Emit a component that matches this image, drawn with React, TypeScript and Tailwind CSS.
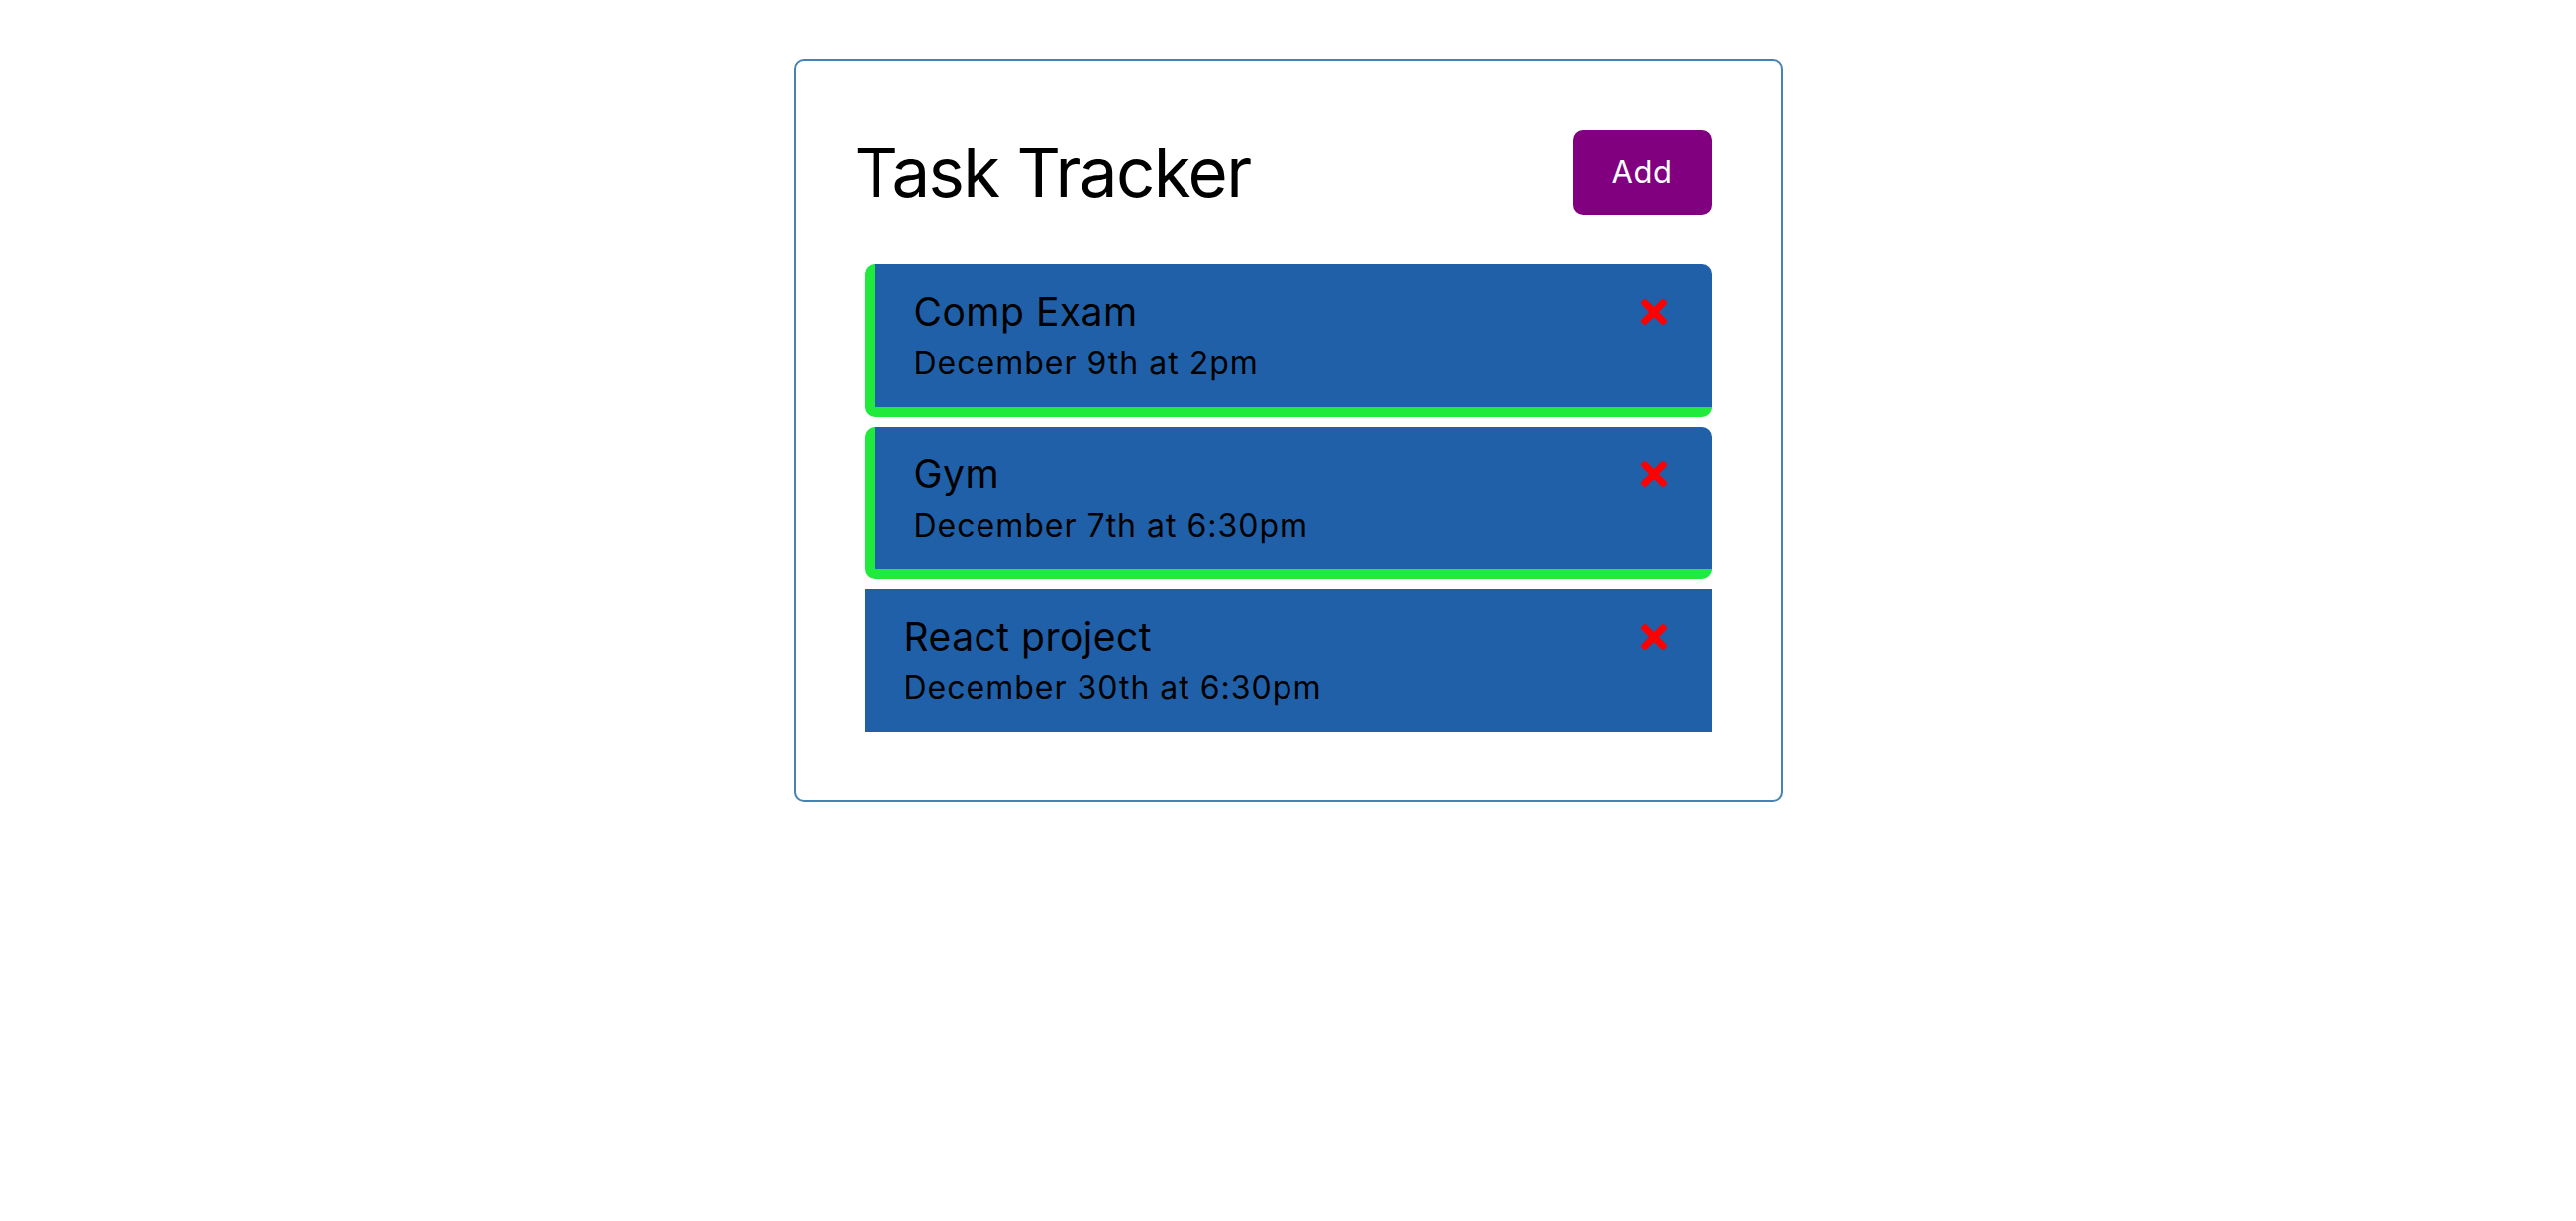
import { FaTimes } from 'react-icons/fa'

type Task = {
  id: number
  text: string
  day: string
  reminder: boolean
}

const tasks: Task[] = [
  { id: 1, text: 'Comp Exam', day: 'December 9th at 2pm', reminder: true },
  { id: 2, text: 'Gym', day: 'December 7th at 6:30pm', reminder: true },
  { id: 3, text: 'React project', day: 'December 30th at 6:30pm', reminder: false },
]

function TaskItem({ task }: { task: Task }) {
  return (
    <div
      className={
        task.reminder
          ? 'm-[10px] rounded-[10px] border-b-[10px] border-l-[10px] border-[#20ea3c] bg-[#2060a8] px-10 py-5'
          : 'm-[10px] bg-[#2060a8] px-10 py-5'
      }
    >
      <h3 className="flex items-center justify-between text-[39px] leading-[56px] font-normal tracking-[0.5px] text-black">
        {task.text}
        <FaTimes className="mr-[6px] h-[38px] w-[26px] text-[#ff0000]" />
      </h3>
      <p className="text-[32px] leading-[48px] tracking-[1px] text-black">{task.day}</p>
    </div>
  )
}

export default function App() {
  return (
    <div className="min-h-screen bg-white font-['Inter',sans-serif]">
      <div className="mx-auto mt-[60px] w-[998px] rounded-[10px] border-2 border-[#4682b4] p-[59px]">
        <header className="mb-[40px] flex items-center justify-between">
          <h1 className="text-[69px] leading-[106px] font-normal tracking-[-1.6px] text-black">Task Tracker</h1>
          <button className="m-[10px] flex h-[86px] w-[141px] items-center justify-center rounded-[10px] bg-[#800080] text-[31px] tracking-[0.5px] text-white">
            Add
          </button>
        </header>
        {tasks.map((task) => (
          <TaskItem key={task.id} task={task} />
        ))}
      </div>
    </div>
  )
}
